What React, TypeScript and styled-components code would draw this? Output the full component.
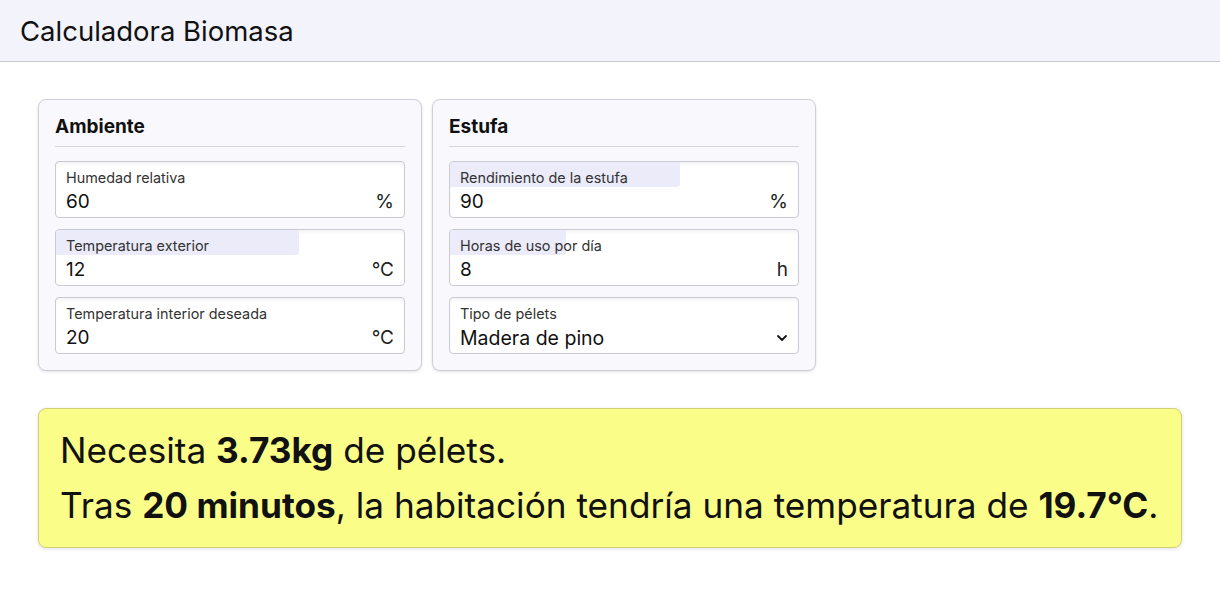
import React from "react";
import styled, { createGlobalStyle } from "styled-components";

const GlobalStyle = createGlobalStyle`
  body {
    margin: 0;
    background: #ffffff;
    font-family: Inter, "Noto Sans", sans-serif;
    color: #111;
  }
`;

const Header = styled.header`
  height: 62px;
  background: #f3f3fc;
  border-bottom: 1px solid #c9c9d4;
  display: flex;
  align-items: center;
  padding: 0 20px;
  box-sizing: border-box;
`;

const Title = styled.h1`
  margin: 0;
  font-size: 27.5px;
  font-weight: 400;
  color: #111;
`;

const Main = styled.main`
  padding: 37px 38px;
  display: flex;
  flex-direction: column;
  gap: 37px;
`;

const CardRow = styled.div`
  display: flex;
  gap: 10px;
`;

const Card = styled.section`
  width: 384px;
  box-sizing: border-box;
  background: #f8f8fd;
  border: 1px solid #cfcfd8;
  border-radius: 8px;
  box-shadow: 0 1px 3px rgba(0, 0, 0, 0.12);
  padding: 15px 16px 16px;
  display: flex;
  flex-direction: column;
  gap: 11px;
`;

const CardTitle = styled.h2`
  margin: 0 0 3px;
  font-size: 19px;
  font-weight: 700;
  padding-bottom: 8px;
  border-bottom: 1px solid #d6d6de;
`;

const Field = styled.label`
  position: relative;
  display: flex;
  flex-direction: column;
  height: 57px;
  box-sizing: border-box;
  background: #fff;
  border: 1px solid #cacad4;
  border-radius: 4px;
  box-shadow: inset 0 3px 4px -2px rgba(0, 0, 0, 0.08);
  overflow: hidden;
`;

const Bar = styled.span`
  position: absolute;
  left: 0;
  top: 0;
  height: 25px;
  background: #ebebfa;
  border-bottom-right-radius: 3px;
`;

const FieldLabel = styled.span`
  position: relative;
  font-size: 14.4px;
  color: #333;
  padding: 7px 10px 0;
  line-height: 17px;
`;

const ValueRow = styled.span`
  position: relative;
  display: flex;
  justify-content: space-between;
  align-items: baseline;
  padding: 3px 10px 0;
  font-size: 19px;
  line-height: 26px;
  color: #111;
`;

const Unit = styled.span`
  color: #222;
`;

const SelectRow = styled(ValueRow)`
  font-size: 19.5px;
  align-items: center;
`;

const Chevron = styled.svg`
  width: 12px;
  height: 12px;
`;

const Result = styled.div`
  background: #fafd88;
  border: 1px solid #d2cf7a;
  border-radius: 8px;
  box-shadow: 0 1px 4px rgba(0, 0, 0, 0.12);
  padding: 14px 21px 14px;
  font-size: 35.2px;
  line-height: 55px;
  color: #111;
  white-space: nowrap;
`;

const Line = styled.p`
  margin: 0;
`;

type InputProps = { label: string; value: string; unit: string; fill: number };

const NumberField = ({ label, value, unit, fill }: InputProps) => (
  <Field>
    <Bar style={{ width: `${fill}%` }} />
    <FieldLabel>{label}</FieldLabel>
    <ValueRow>
      <span>{value}</span>
      <Unit>{unit}</Unit>
    </ValueRow>
  </Field>
);

export default function App() {
  return (
    <>
      <GlobalStyle />
      <Header>
        <Title>Calculadora Biomasa</Title>
      </Header>
      <Main>
        <CardRow>
          <Card>
            <CardTitle>Ambiente</CardTitle>
            <NumberField label="Humedad relativa" value="60" unit="%" fill={0} />
            <NumberField label="Temperatura exterior" value="12" unit="°C" fill={69.7} />
            <NumberField label="Temperatura interior deseada" value="20" unit="°C" fill={0} />
          </Card>
          <Card>
            <CardTitle>Estufa</CardTitle>
            <NumberField label="Rendimiento de la estufa" value="90" unit="%" fill={66} />
            <NumberField label="Horas de uso por día" value="8" unit="h" fill={33.3} />
            <Field>
              <FieldLabel>Tipo de pélets</FieldLabel>
              <SelectRow>
                <span>Madera de pino</span>
                <Chevron viewBox="0 0 12 12">
                  <path d="M2 4l4 4 4-4" fill="none" stroke="#111" strokeWidth="1.8" strokeLinecap="round" strokeLinejoin="round" />
                </Chevron>
              </SelectRow>
            </Field>
          </Card>
        </CardRow>
        <Result>
          <Line>
            Necesita <b>3.73kg</b> de pélets.
          </Line>
          <Line>
            Tras <b>20 minutos</b>, la habitación tendría una temperatura de <b>19.7°C</b>.
          </Line>
        </Result>
      </Main>
    </>
  );
}
